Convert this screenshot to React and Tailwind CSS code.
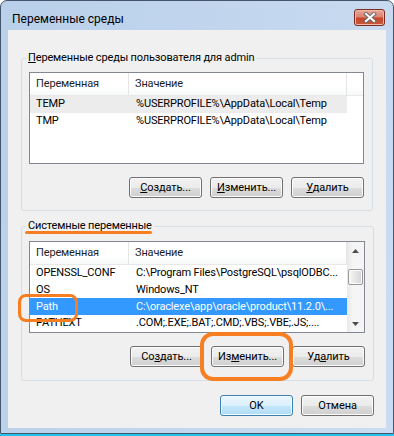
import React from 'react';

/**
 * Диалог "Переменные среды" в стиле Windows 7
 */

const ORANGE = 'border-[#f77f22]';

const Btn = ({ children, primary }) => (
  <button
    className={`w-[73px] h-[21px] rounded-[3px] border text-[11px] tracking-[-0.1px] leading-none text-black ${
      primary
        ? 'border-[#3c7fb1] bg-[linear-gradient(#eaf6fd_0%,#dbf0fc_50%,#c4e7fb_50%,#b0dcf5_100%)] shadow-[inset_0_0_0_1px_#f4fbff]'
        : 'border-[#707070] bg-[linear-gradient(#f2f2f2_0%,#ebebeb_50%,#dddddd_50%,#cfcfcf_100%)] shadow-[inset_0_0_0_1px_#fcfcfc]'
    }`}
  >
    {children}
  </button>
);

const Arrow = ({ down }) => (
  <div className="h-[17px] flex items-center justify-center">
    <svg width="7" height="4" viewBox="0 0 7 4">
      <path d={down ? 'M0 0 L7 0 L3.5 4 Z' : 'M0 4 L3.5 0 L7 4 Z'} fill="#4d4d4d" />
    </svg>
  </div>
);

const Scrollbar = () => (
  <div className="w-[17px] flex flex-col bg-[linear-gradient(90deg,#e9e9e9,#f5f5f5_35%,#f5f5f5)]">
    <Arrow />
    <div className="flex-1 px-[1px]">
      <div className="mt-[10px] h-[16px] rounded-[2px] border border-[#979797] bg-[linear-gradient(90deg,#f7f7f7,#e6e6e6_50%,#d2d2d2)] shadow-[inset_0_0_0_1px_#fbfbfb]" />
    </div>
    <Arrow down />
  </div>
);

const ListView = ({ rows, selected, inactive, scroll }) => (
  <div className="h-[92px] border border-[#828790] bg-white flex">
    <div className="flex-1 flex flex-col min-w-0">
      {/* Заголовок */}
      <div className="h-[23px] flex text-[#1e1e1e] bg-[linear-gradient(#ffffff,#ffffff_60%,#f7f8f9)] border-b border-[#e8e8e8]">
        <div className="w-[99px] border-r border-[#e5e5e5] pl-[6px] flex items-center">Переменная</div>
        <div className="w-[218px] border-r border-[#e5e5e5] pl-[6px] flex items-center">Значение</div>
        <div className="flex-1" />
      </div>
      {rows.map(([name, value], i) => (
        <div
          key={name}
          className={`h-[17px] w-[317px] flex items-center whitespace-nowrap overflow-hidden ${
            i === selected ? 'bg-[#3399ff] text-white' : i === inactive ? 'bg-[#ececec] text-black' : 'text-black'
          }`}
        >
          <div className="w-[99px] pl-[6px]">{name}</div>
          <div className="w-[218px] pl-[7px] overflow-hidden">{value}</div>
        </div>
      ))}
    </div>
    {scroll && <Scrollbar />}
  </div>
);

const GroupBox = ({ label, className, children }) => (
  <fieldset className={`mx-[13px] border border-[#d5dfe5] rounded-[3px] px-[7px] pr-[8px] ${className}`}>
    <legend className="-ml-[3px] px-[2px] leading-[14px] text-black">{label}</legend>
    {children}
  </fieldset>
);

const CloseButton = () => (
  <div className="mt-[8px] w-[31px] h-[17px] rounded-[3px] border border-[#7a2c22] bg-[linear-gradient(#e9a898_0%,#dc8471_45%,#c8462d_55%,#c95838_100%)] shadow-[inset_0_0_0_1px_#efb8aa] flex items-center justify-center">
    <svg width="14" height="11" viewBox="0 0 14 11">
      <path d="M3 2 L11 9 M11 2 L3 9" stroke="#6b6b6b" strokeWidth="4" strokeLinecap="square" />
      <path d="M3 2 L11 9 M11 2 L3 9" stroke="#ffffff" strokeWidth="2" strokeLinecap="square" />
    </svg>
  </div>
);

const userRows = [
  ['TEMP', '%USERPROFILE%\\AppData\\Local\\Temp'],
  ['TMP', '%USERPROFILE%\\AppData\\Local\\Temp'],
];

const sysRows = [
  ['OPENSSL_CONF', 'C:\\Program Files\\PostgreSQL\\psqlODBC...'],
  ['OS', 'Windows_NT'],
  ['Path', 'C:\\oraclexe\\app\\oracle\\product\\11.2.0\\...'],
  ['PATHEXT', '.COM;.EXE;.BAT;.CMD;.VBS;.VBE;.JS;....'],
];

export default function App() {
  return (
    <div className="w-[394px] h-[436px] bg-white flex flex-col font-['Roboto',sans-serif] text-[11px] tracking-[-0.15px]">
      <div className="h-[434px] border border-[#44546a] rounded-t-[7px] bg-[linear-gradient(100deg,#b9d0ea,#c3d7ee_60%,#cadcf1)] flex flex-col">
        {/* Заголовок окна */}
        <div className="h-[29px] flex items-start justify-between pl-[11px] pr-[8px]">
          <span className="pt-[11px] leading-[14px] text-[12px] tracking-normal text-black">Переменные среды</span>
          <CloseButton />
        </div>

        {/* Клиентская область */}
        <div className="relative mx-[7px] mb-[5px] flex-1 bg-[#f0f0f0] flex flex-col">
          <GroupBox
            className="mt-[21px] pb-[12px]"
            label={<><span className="underline">П</span>еременные среды пользователя для admin</>}
          >
            <div className="mt-[7px]">
              <ListView rows={userRows} inactive={0} />
            </div>
            <div className="mt-[13px] flex justify-end gap-[8px]">
              <Btn><span className="underline">С</span>оздать...</Btn>
              <Btn><span className="underline">И</span>зменить...</Btn>
              <Btn><span className="underline">У</span>далить</Btn>
            </div>
          </GroupBox>

          <GroupBox className="mt-[8px] pb-[13px]" label="Системные переменные">
            <div className="mt-[8px]">
              <ListView rows={sysRows} selected={2} scroll />
            </div>
            <div className="mt-[13px] flex justify-end gap-[8px]">
              <Btn>Со<span className="underline">з</span>дать...</Btn>
              <Btn>Из<span className="underline">м</span>енить...</Btn>
              <Btn>Уд<span className="underline">а</span>лить</Btn>
            </div>
          </GroupBox>

          <div className="mt-[14px] mr-[12px] flex justify-end gap-[8px]">
            <Btn primary>OK</Btn>
            <Btn>Отмена</Btn>
          </div>

          {/* Пометки поверх */}
          <div className="absolute left-[17px] top-[201px] w-[127px] h-[3px] rounded-full bg-[#f77f22]" />
          <div className={`absolute left-[10px] top-[264px] w-[60px] h-[28px] rounded-[8px] border-[3px] ${ORANGE}`} />
          <div className={`absolute left-[192px] top-[302px] w-[93px] h-[49px] rounded-[13px] border-[4px] ${ORANGE}`} />
        </div>
      </div>
      <div className="h-[2px] bg-[#21c3ec]" />
    </div>
  );
}
